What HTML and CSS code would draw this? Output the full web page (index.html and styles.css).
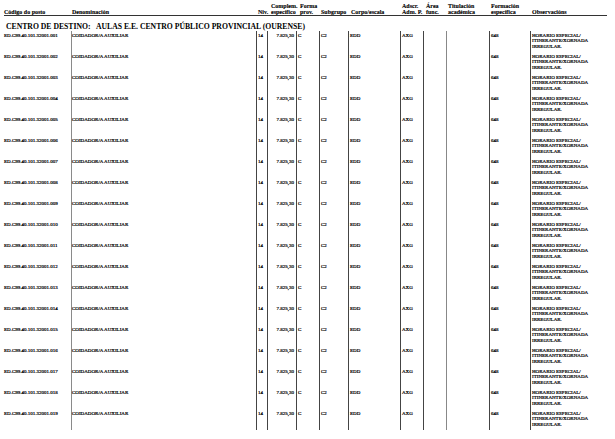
FILE: index.html
```html
<!DOCTYPE html>
<html lang="es">
<head>
<meta charset="utf-8">
<title>Relación de postos</title>
<link rel="stylesheet" href="styles.css">
</head>
<body>
<div class="page">
  <div class="grid head">
    <div class="h h-code">Código do posto</div>
    <div class="h h-den">Denominación</div>
    <div class="h h-niv">Niv.</div>
    <div class="h h-comp">Complem.<br>específico</div>
    <div class="h h-forma">Forma<br>prov.</div>
    <div class="h h-sub">Subgrupo</div>
    <div class="h h-corpo">Corpo/escala</div>
    <div class="h h-adscr">Adscr.<br>Adm. P.</div>
    <div class="h h-area">Área<br>func.</div>
    <div class="h h-tit">Titulación<br>académica</div>
    <div class="h h-form">Formación<br>específica</div>
    <div class="h h-obs">Observacións</div>
  </div>
  <div class="title">CENTRO DE DESTINO:   AULAS E.E. CENTRO PÚBLICO PROVINCIAL (OURENSE)</div>
  <div class="body">
    <div class="grid row"><div class="c code">ED.C99.40.101.32001.001</div><div class="c den">COIDADOR/A AUXILIAR</div><div class="c">14</div><div class="c num">7.825,30</div><div class="c">C</div><div class="c">C2</div><div class="c">EDD</div><div class="c">AXG</div><div class="c"></div><div class="c lt"></div><div class="c">648</div><div class="c obs">HORARIO ESPECIAL/<br>ITINERANTE/XORNADA<br>IRREGULAR.</div></div>
    <div class="grid row"><div class="c code">ED.C99.40.101.32001.002</div><div class="c den">COIDADOR/A AUXILIAR</div><div class="c">14</div><div class="c num">7.825,30</div><div class="c">C</div><div class="c">C2</div><div class="c">EDD</div><div class="c">AXG</div><div class="c"></div><div class="c lt"></div><div class="c">648</div><div class="c obs">HORARIO ESPECIAL/<br>ITINERANTE/XORNADA<br>IRREGULAR.</div></div>
    <div class="grid row"><div class="c code">ED.C99.40.101.32001.003</div><div class="c den">COIDADOR/A AUXILIAR</div><div class="c">14</div><div class="c num">7.825,30</div><div class="c">C</div><div class="c">C2</div><div class="c">EDD</div><div class="c">AXG</div><div class="c"></div><div class="c lt"></div><div class="c">648</div><div class="c obs">HORARIO ESPECIAL/<br>ITINERANTE/XORNADA<br>IRREGULAR.</div></div>
    <div class="grid row"><div class="c code">ED.C99.40.101.32001.004</div><div class="c den">COIDADOR/A AUXILIAR</div><div class="c">14</div><div class="c num">7.825,30</div><div class="c">C</div><div class="c">C2</div><div class="c">EDD</div><div class="c">AXG</div><div class="c"></div><div class="c lt"></div><div class="c">648</div><div class="c obs">HORARIO ESPECIAL/<br>ITINERANTE/XORNADA<br>IRREGULAR.</div></div>
    <div class="grid row"><div class="c code">ED.C99.40.101.32001.005</div><div class="c den">COIDADOR/A AUXILIAR</div><div class="c">14</div><div class="c num">7.825,30</div><div class="c">C</div><div class="c">C2</div><div class="c">EDD</div><div class="c">AXG</div><div class="c"></div><div class="c lt"></div><div class="c">648</div><div class="c obs">HORARIO ESPECIAL/<br>ITINERANTE/XORNADA<br>IRREGULAR.</div></div>
    <div class="grid row"><div class="c code">ED.C99.40.101.32001.006</div><div class="c den">COIDADOR/A AUXILIAR</div><div class="c">14</div><div class="c num">7.825,30</div><div class="c">C</div><div class="c">C2</div><div class="c">EDD</div><div class="c">AXG</div><div class="c"></div><div class="c lt"></div><div class="c">648</div><div class="c obs">HORARIO ESPECIAL/<br>ITINERANTE/XORNADA<br>IRREGULAR.</div></div>
    <div class="grid row"><div class="c code">ED.C99.40.101.32001.007</div><div class="c den">COIDADOR/A AUXILIAR</div><div class="c">14</div><div class="c num">7.825,30</div><div class="c">C</div><div class="c">C2</div><div class="c">EDD</div><div class="c">AXG</div><div class="c"></div><div class="c lt"></div><div class="c">648</div><div class="c obs">HORARIO ESPECIAL/<br>ITINERANTE/XORNADA<br>IRREGULAR.</div></div>
    <div class="grid row"><div class="c code">ED.C99.40.101.32001.008</div><div class="c den">COIDADOR/A AUXILIAR</div><div class="c">14</div><div class="c num">7.825,30</div><div class="c">C</div><div class="c">C2</div><div class="c">EDD</div><div class="c">AXG</div><div class="c"></div><div class="c lt"></div><div class="c">648</div><div class="c obs">HORARIO ESPECIAL/<br>ITINERANTE/XORNADA<br>IRREGULAR.</div></div>
    <div class="grid row"><div class="c code">ED.C99.40.101.32001.009</div><div class="c den">COIDADOR/A AUXILIAR</div><div class="c">14</div><div class="c num">7.825,30</div><div class="c">C</div><div class="c">C2</div><div class="c">EDD</div><div class="c">AXG</div><div class="c"></div><div class="c lt"></div><div class="c">648</div><div class="c obs">HORARIO ESPECIAL/<br>ITINERANTE/XORNADA<br>IRREGULAR.</div></div>
    <div class="grid row"><div class="c code">ED.C99.40.101.32001.010</div><div class="c den">COIDADOR/A AUXILIAR</div><div class="c">14</div><div class="c num">7.825,30</div><div class="c">C</div><div class="c">C2</div><div class="c">EDD</div><div class="c">AXG</div><div class="c"></div><div class="c lt"></div><div class="c">648</div><div class="c obs">HORARIO ESPECIAL/<br>ITINERANTE/XORNADA<br>IRREGULAR.</div></div>
    <div class="grid row"><div class="c code">ED.C99.40.101.32001.011</div><div class="c den">COIDADOR/A AUXILIAR</div><div class="c">14</div><div class="c num">7.825,30</div><div class="c">C</div><div class="c">C2</div><div class="c">EDD</div><div class="c">AXG</div><div class="c"></div><div class="c lt"></div><div class="c">648</div><div class="c obs">HORARIO ESPECIAL/<br>ITINERANTE/XORNADA<br>IRREGULAR.</div></div>
    <div class="grid row"><div class="c code">ED.C99.40.101.32001.012</div><div class="c den">COIDADOR/A AUXILIAR</div><div class="c">14</div><div class="c num">7.825,30</div><div class="c">C</div><div class="c">C2</div><div class="c">EDD</div><div class="c">AXG</div><div class="c"></div><div class="c lt"></div><div class="c">648</div><div class="c obs">HORARIO ESPECIAL/<br>ITINERANTE/XORNADA<br>IRREGULAR.</div></div>
    <div class="grid row"><div class="c code">ED.C99.40.101.32001.013</div><div class="c den">COIDADOR/A AUXILIAR</div><div class="c">14</div><div class="c num">7.825,30</div><div class="c">C</div><div class="c">C2</div><div class="c">EDD</div><div class="c">AXG</div><div class="c"></div><div class="c lt"></div><div class="c">648</div><div class="c obs">HORARIO ESPECIAL/<br>ITINERANTE/XORNADA<br>IRREGULAR.</div></div>
    <div class="grid row"><div class="c code">ED.C99.40.101.32001.014</div><div class="c den">COIDADOR/A AUXILIAR</div><div class="c">14</div><div class="c num">7.825,30</div><div class="c">C</div><div class="c">C2</div><div class="c">EDD</div><div class="c">AXG</div><div class="c"></div><div class="c lt"></div><div class="c">648</div><div class="c obs">HORARIO ESPECIAL/<br>ITINERANTE/XORNADA<br>IRREGULAR.</div></div>
    <div class="grid row"><div class="c code">ED.C99.40.101.32001.015</div><div class="c den">COIDADOR/A AUXILIAR</div><div class="c">14</div><div class="c num">7.825,30</div><div class="c">C</div><div class="c">C2</div><div class="c">EDD</div><div class="c">AXG</div><div class="c"></div><div class="c lt"></div><div class="c">648</div><div class="c obs">HORARIO ESPECIAL/<br>ITINERANTE/XORNADA<br>IRREGULAR.</div></div>
    <div class="grid row"><div class="c code">ED.C99.40.101.32001.016</div><div class="c den">COIDADOR/A AUXILIAR</div><div class="c">14</div><div class="c num">7.825,30</div><div class="c">C</div><div class="c">C2</div><div class="c">EDD</div><div class="c">AXG</div><div class="c"></div><div class="c lt"></div><div class="c">648</div><div class="c obs">HORARIO ESPECIAL/<br>ITINERANTE/XORNADA<br>IRREGULAR.</div></div>
    <div class="grid row"><div class="c code">ED.C99.40.101.32001.017</div><div class="c den">COIDADOR/A AUXILIAR</div><div class="c">14</div><div class="c num">7.825,30</div><div class="c">C</div><div class="c">C2</div><div class="c">EDD</div><div class="c">AXG</div><div class="c"></div><div class="c lt"></div><div class="c">648</div><div class="c obs">HORARIO ESPECIAL/<br>ITINERANTE/XORNADA<br>IRREGULAR.</div></div>
    <div class="grid row"><div class="c code">ED.C99.40.101.32001.018</div><div class="c den">COIDADOR/A AUXILIAR</div><div class="c">14</div><div class="c num">7.825,30</div><div class="c">C</div><div class="c">C2</div><div class="c">EDD</div><div class="c">AXG</div><div class="c"></div><div class="c lt"></div><div class="c">648</div><div class="c obs">HORARIO ESPECIAL/<br>ITINERANTE/XORNADA<br>IRREGULAR.</div></div>
    <div class="grid row"><div class="c code">ED.C99.40.101.32001.019</div><div class="c den">COIDADOR/A AUXILIAR</div><div class="c">14</div><div class="c num">7.825,30</div><div class="c">C</div><div class="c">C2</div><div class="c">EDD</div><div class="c">AXG</div><div class="c"></div><div class="c lt"></div><div class="c">648</div><div class="c obs">HORARIO ESPECIAL/<br>ITINERANTE/XORNADA<br>IRREGULAR.</div></div>
  </div>
</div>
</body>
</html>
```
FILE: styles.css
```css
html, body {
  margin: 0;
  padding: 0;
  background: #fff;
}
body {
  font-family: "Liberation Serif", "Times New Roman", serif;
  color: #000;
}
.page {
  margin-left: 4px;
  width: 603px;
}
.grid {
  display: grid;
  grid-template-columns: 67px 185px 11px 29px 23px 29px 52px 23px 23px 43px 41px 77px;
}
.head {
  height: 16px;
  box-sizing: border-box;
  border-bottom: 1px solid #333;
  align-items: end;
  padding-bottom: 0.5px;
}
.h {
  font-size: 6px;
  line-height: 6px;
  font-weight: bold;
  white-space: nowrap;
  padding-left: 2px;
  -webkit-text-stroke: 0.1px #000;
}
.h-code { padding-left: 0; }
.h-den { padding-left: 1px; }
.h-comp, .h-forma { padding-left: 4px; }
.h-corpo, .h-area { padding-left: 3px; }
.title {
  height: 15px;
  box-sizing: border-box;
  padding-top: 5.5px;
  padding-left: 2px;
  font-size: 7.7px;
  line-height: 9px;
  font-weight: bold;
  white-space: pre;
}
.row {
  height: 21px;
}
.c {
  border-left: 1px solid #444;
  padding: 1.5px 0 0 1px;
  font-size: 5px;
  line-height: 5.5px;
  white-space: nowrap;
  overflow: visible;
  -webkit-text-stroke: 0.2px #000;
}
.c.code {
  border-left: 0;
  padding-left: 0;
}
.c.den {
  border-left-color: #8a8a8a;
  padding-left: 0;
}
.c.lt {
  border-left-color: #888;
}
.c.num {
  text-align: right;
  padding-right: 2px;
}
```
